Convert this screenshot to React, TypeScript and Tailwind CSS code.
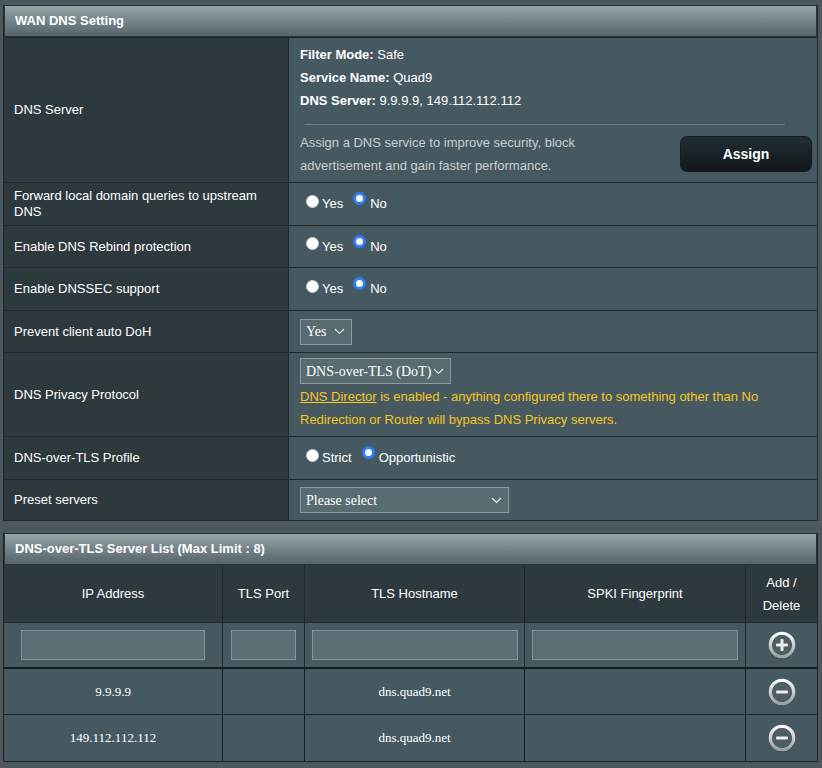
import React from "react";

const sans = { fontFamily: '"Liberation Sans", Arial, sans-serif' } as React.CSSProperties;

function Radio({ checked }: { checked?: boolean }) {
  return checked ? (
    <span className="inline-block w-[13px] h-[13px] rounded-full border-[3px] border-[#2f7cf6] bg-white relative top-[-3px]" />
  ) : (
    <span className="inline-block w-[13px] h-[13px] rounded-full bg-white border border-[#d0d0d0] relative top-[-3px]" />
  );
}

function RadioPair({ a, b }: { a: string; b: string }) {
  return (
    <div className="flex items-center text-[13px] text-white pl-[6px]">
      <Radio />
      <span className="ml-[3px]">{a}</span>
      <span className="ml-[10px]"><Radio checked /></span>
      <span className="ml-[4px]">{b}</span>
    </div>
  );
}

function Chevron() {
  return (
    <svg width="11" height="7" viewBox="0 0 11 7" className="ml-auto">
      <path d="M1 1 L5.5 5.5 L10 1" fill="none" stroke="#e6ecee" strokeWidth="1.2" />
    </svg>
  );
}

function Select({ label, w }: { label: string; w: string }) {
  return (
    <div
      className={`${w} h-[26px] flex items-center bg-[#586b71] border border-[#8c9a9d] pl-[5px] pr-[6px] text-white text-[14px]`}
      style={{ fontFamily: '"Liberation Serif", "Times New Roman", serif' }}
    >
      <span>{label}</span>
      <Chevron />
    </div>
  );
}

function Row({ label, h, children }: { label: React.ReactNode; h: string; children: React.ReactNode }) {
  return (
    <div className={`grid grid-cols-[285px_1fr] border-t border-[#20292c] ${h}`}>
      <div className="bg-[#2e393d] border-r border-[#20292c] flex items-center pl-[10px] pr-[8px] text-[13px] text-white leading-[16px]">
        {label}
      </div>
      <div className="bg-[#475960] flex items-center pl-[11px]">{children}</div>
    </div>
  );
}

function CircleIcon({ plus }: { plus?: boolean }) {
  const id = plus ? "gp" : "gm";
  return (
    <svg width="30" height="30" viewBox="0 0 30 30">
      <defs>
        <linearGradient id={id} x1="0" y1="0" x2="0" y2="1">
          <stop offset="0" stopColor="#fafafa" />
          <stop offset="1" stopColor="#9a9fa0" />
        </linearGradient>
      </defs>
      <circle cx="15" cy="16" r="13.2" fill="#232c2f" opacity="0.45" />
      <circle cx="15" cy="15" r="11.6" fill="none" stroke={`url(#${id})`} strokeWidth="3.4" />
      <circle cx="15" cy="15" r="9.9" fill="#4e5e63" />
      <rect x="9" y="13.5" width="12" height="3" rx="1" fill="#ececec" />
      {plus && <rect x="13.5" y="9" width="3" height="12" rx="1" fill="#ececec" />}
    </svg>
  );
}

const headerCls =
  "h-[32px] flex items-center pl-[10px] text-white font-bold text-[13px] bg-gradient-to-b from-[#96a3a7] to-[#56656a] border border-[#2a3336]";

export default function App() {
  const serif = { fontFamily: '"Liberation Serif", "Times New Roman", serif' } as React.CSSProperties;
  return (
    <div className="min-h-[768px] w-[822px] bg-[#4c585c] pt-[5px] pl-[3px]" style={sans}>
      <div className="w-[815px] border-b border-l border-r border-[#20292c]">
        <div className={headerCls}>WAN DNS Setting</div>
        <Row label="DNS Server" h="h-[145px]">
          <div className="w-full pr-[5px] text-[13px] text-white">
            <div className="leading-[23px]">
              <div><b>Filter Mode:</b> Safe</div>
              <div><b>Service Name:</b> Quad9</div>
              <div><b>DNS Server:</b> 9.9.9.9, 149.112.112.112</div>
            </div>
            <div className="h-px bg-[#6e7d82] ml-[5px] mr-[27px] mt-[12px]" />
            <div className="flex items-center mt-[6px]">
              <div className="w-[300px] text-[#c7cdcf] leading-[23px]">
                Assign a DNS service to improve security, block advertisement and gain faster performance.
              </div>
              <div className="ml-auto w-[132px] h-[36px] rounded-[7px] bg-gradient-to-b from-[#222e32] to-[#10181b] border border-[#141c1f] flex items-center justify-center font-bold text-[14px] text-white">
                Assign
              </div>
            </div>
          </div>
        </Row>
        <Row label="Forward local domain queries to upstream DNS" h="h-[43px]">
          <RadioPair a="Yes" b="No" />
        </Row>
        <Row label="Enable DNS Rebind protection" h="h-[42px]">
          <RadioPair a="Yes" b="No" />
        </Row>
        <Row label="Enable DNSSEC support" h="h-[43px]">
          <RadioPair a="Yes" b="No" />
        </Row>
        <Row label="Prevent client auto DoH" h="h-[42px]">
          <Select label="Yes" w="w-[52px]" />
        </Row>
        <Row label="DNS Privacy Protocol" h="h-[84px]">
          <div>
            <Select label="DNS-over-TLS (DoT)" w="w-[151px]" />
            <div className="text-[13px] text-[#f5c622] leading-[23px] mt-[1px]">
              <span className="underline">DNS Director</span> is enabled - anything configured there to something other than No
              <br />
              Redirection or Router will bypass DNS Privacy servers.
            </div>
          </div>
        </Row>
        <Row label="DNS-over-TLS Profile" h="h-[43px]">
          <RadioPair a="Strict" b="Opportunistic" />
        </Row>
        <Row label="Preset servers" h="h-[41px]">
          <Select label="Please select" w="w-[209px]" />
        </Row>
      </div>

      <div className="w-[815px] mt-[12px] border-l border-r border-b border-[#1c2426]">
        <div className={headerCls}>DNS-over-TLS Server List (Max Limit : 8)</div>
        <div className="grid grid-cols-[219px_82px_220px_221px_1fr] bg-[#2e393d] h-[57px] text-[13px] text-white text-center">
          <div className="flex items-center justify-center border-r border-[#20292c]">IP Address</div>
          <div className="flex items-center justify-center border-r border-[#20292c]">TLS Port</div>
          <div className="flex items-center justify-center border-r border-[#20292c]">TLS Hostname</div>
          <div className="flex items-center justify-center border-r border-[#20292c]">SPKI Fingerprint</div>
          <div className="flex items-center justify-center leading-[23px]">Add /<br />Delete</div>
        </div>
        <div className="grid grid-cols-[219px_82px_220px_221px_1fr] bg-[#475960] h-[45px] border-t border-[#20292c]">
          <div className="flex items-center justify-center border-r border-[#20292c]">
            <div className="w-[184px] h-[30px] bg-[#5a6e74] border border-[#84959a]" />
          </div>
          <div className="flex items-center justify-center border-r border-[#20292c]">
            <div className="w-[65px] h-[30px] bg-[#5a6e74] border border-[#84959a]" />
          </div>
          <div className="flex items-center justify-center border-r border-[#20292c]">
            <div className="w-[206px] h-[30px] bg-[#5a6e74] border border-[#84959a]" />
          </div>
          <div className="flex items-center justify-center border-r border-[#20292c]">
            <div className="w-[206px] h-[30px] bg-[#5a6e74] border border-[#84959a]" />
          </div>
          <div className="flex items-center justify-center">
            <CircleIcon plus />
          </div>
        </div>
        {[
          ["9.9.9.9", "dns.quad9.net"],
          ["149.112.112.112", "dns.quad9.net"],
        ].map(([ip, host], i) => (
          <div
            key={i}
            className={`grid grid-cols-[219px_82px_220px_221px_1fr] bg-[#475960] h-[47px] ${i === 0 ? "border-t-2 border-[#161d1f]" : "border-t border-[#1c2426]"} text-[13px] text-white`}
            style={serif}
          >
            <div className="flex items-center justify-center border-r border-[#161d1f]">{ip}</div>
            <div className="border-r border-[#161d1f]" />
            <div className="flex items-center justify-center border-r border-[#161d1f]">{host}</div>
            <div className="border-r border-[#161d1f]" />
            <div className="flex items-center justify-center">
              <CircleIcon />
            </div>
          </div>
        ))}
      </div>
    </div>
  );
}
